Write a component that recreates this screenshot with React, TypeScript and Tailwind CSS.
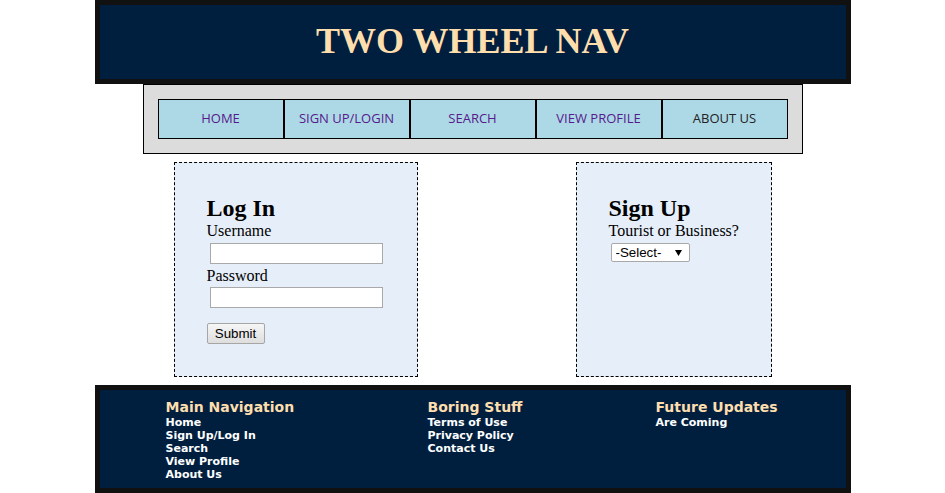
import React from "react";

const navItems = [
  { label: "HOME", color: "text-[#551a8b]" },
  { label: "SIGN UP/LOGIN", color: "text-[#551a8b]" },
  { label: "SEARCH", color: "text-[#551a8b]" },
  { label: "VIEW PROFILE", color: "text-[#551a8b]" },
  { label: "ABOUT US", color: "text-[#222222]" },
];

const footerCols = [
  { title: "Main Navigation", links: ["Home", "Sign Up/Log In", "Search", "View Profile", "About Us"], w: "w-[262px]" },
  { title: "Boring Stuff", links: ["Terms of Use", "Privacy Policy", "Contact Us"], w: "w-[228px]" },
  { title: "Future Updates", links: ["Are Coming"], w: "w-[180px]" },
];

export default function App() {
  return (
    <div className="min-h-[493px] w-full bg-white">
      <div className="mx-auto w-[756px]">
        {/* Header */}
        <header className="h-[84px] border-[5px] border-[#111111] bg-[#001f3f] flex items-center justify-center">
          <h1
            className="text-[36px] font-bold text-[#ffdead] leading-none pb-[2px]"
            style={{ fontFamily: '"Liberation Serif", "Times New Roman", serif' }}
          >
            TWO WHEEL NAV
          </h1>
        </header>

        {/* Nav */}
        <nav className="mx-auto w-[660px] h-[70px] border border-black bg-[#dcdcdc] px-[14px] py-[14px] flex">
          {navItems.map((item) => (
            <a
              key={item.label}
              href="#"
              className={`w-[126px] h-[40px] border border-black bg-[#add8e6] flex items-center justify-center text-[13px] ${item.color}`}
              style={{ fontFamily: '"Open Sans", "Noto Sans", sans-serif' }}
            >
              {item.label}
            </a>
          ))}
        </nav>

        {/* Main */}
        <main
          className="mx-auto w-[660px] px-[31px] mt-[8px] flex justify-between"
          style={{ fontFamily: '"Liberation Serif", "Times New Roman", serif' }}
        >
          <section className="w-[244px] h-[215px] border border-dashed border-black bg-[#e6eef9] pl-[32px] pt-[31px] flex flex-col items-start text-black">
            <h2 className="text-[24px] font-bold leading-[28px]">Log In</h2>
            <label className="text-[16px] leading-[18px]">Username</label>
            <input
              type="text"
              className="mt-[3px] ml-[3px] w-[173px] h-[21px] border border-[#a9a9a9] bg-white px-[2px] text-[13px] outline-none"
              style={{ fontFamily: '"Liberation Sans", Arial, sans-serif' }}
            />
            <label className="mt-[3px] text-[16px] leading-[18px]">Password</label>
            <input
              type="password"
              className="mt-[2px] ml-[3px] w-[173px] h-[21px] border border-[#a9a9a9] bg-white px-[2px] text-[13px] outline-none"
              style={{ fontFamily: '"Liberation Sans", Arial, sans-serif' }}
            />
            <button
              type="button"
              className="mt-[15px] w-[58px] h-[21px] border border-[#a6a6a6] rounded-[2px] bg-gradient-to-b from-[#f6f6f6] to-[#dedede] text-[13.33px] leading-none text-black flex items-center justify-center"
              style={{ fontFamily: '"Liberation Sans", Arial, sans-serif' }}
            >
              Submit
            </button>
          </section>

          <section className="w-[196px] h-[215px] border border-dashed border-black bg-[#e6eef9] pl-[32px] pt-[31px] flex flex-col items-start text-black">
            <h2 className="text-[24px] font-bold leading-[28px]">Sign Up</h2>
            <label className="text-[16px] leading-[18px] whitespace-nowrap">Tourist or Business?</label>
            <div className="relative mt-[3px] ml-[2px]">
              <select
                className="block appearance-none w-[79px] h-[19px] border border-[#a9a9a9] rounded-[2px] bg-white pl-[4px] py-0 text-[13.33px] leading-[17px] text-black outline-none"
                style={{ fontFamily: '"Liberation Sans", Arial, sans-serif' }}
                defaultValue="select"
              >
                <option value="select">-Select-</option>
                <option value="tourist">Tourist</option>
                <option value="business">Business</option>
              </select>
              <svg
                className="pointer-events-none absolute right-[8px] top-[7px]"
                width="7"
                height="6"
                viewBox="0 0 7 6"
              >
                <polygon points="0,0 7,0 3.5,6" fill="#000" />
              </svg>
            </div>
          </section>
        </main>

        {/* Footer */}
        <footer
          className="mt-[8px] h-[108px] border-[5px] border-[#111111] bg-[#001f3f] pt-[9px] pl-[66px] flex"
          style={{ fontFamily: '"DejaVu Sans", Verdana, sans-serif' }}
        >
          {footerCols.map((col) => (
            <div key={col.title} className={`${col.w} flex flex-col`}>
              <h3 className="text-[14px] font-bold leading-[17px] text-[#ffdead]">{col.title}</h3>
              {col.links.map((l) => (
                <a key={l} href="#" className="text-[11px] font-bold leading-[13px] text-white">
                  {l}
                </a>
              ))}
            </div>
          ))}
        </footer>
      </div>
    </div>
  );
}
